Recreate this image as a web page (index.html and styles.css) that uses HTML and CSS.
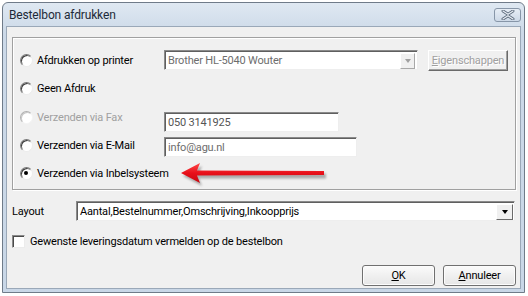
FILE: index.html
```html
<!DOCTYPE html>
<html lang="nl">
<head>
    <meta charset="UTF-8">
    <title>Bestelbon afdrukken</title>
    <link rel="stylesheet" href="styles.css">
</head>
<body>
    <div class="window">
        <div class="titlebar">
            <span class="title">Bestelbon afdrukken</span>
            <div class="close">
                <svg width="16" height="10" viewBox="0 0 16 10">
                    <path d="M3 1 L8 4.2 L13 1 M3 9 L8 5.8 L13 9" fill="none" stroke="#5d6b7c" stroke-width="3" stroke-linecap="round"/>
                    <path d="M3 1 L8 4.2 L13 1 M3 9 L8 5.8 L13 9" fill="none" stroke="#e8eef5" stroke-width="1.2" stroke-linecap="round"/>
                </svg>
            </div>
        </div>
        <div class="client">
            <div class="group">
                <div class="row">
                    <label class="option"><span class="radio"></span>Afdrukken op printer</label>
                    <div class="combo disabled printer">
                        <span class="combo-text">Brother HL-5040 Wouter</span>
                        <span class="combo-btn"><span class="tri"></span></span>
                    </div>
                    <div class="btn-classic disabled"><u>E</u>igenschappen</div>
                </div>
                <div class="row">
                    <label class="option"><span class="radio"></span>Geen Afdruk</label>
                </div>
                <div class="row">
                    <label class="option disabled"><span class="radio"></span>Verzenden via Fax</label>
                    <div class="field fax">050 3141925</div>
                </div>
                <div class="row">
                    <label class="option"><span class="radio"></span>Verzenden via E-Mail</label>
                    <div class="field mail">info@agu.nl</div>
                </div>
                <div class="row">
                    <label class="option"><span class="radio checked"></span>Verzenden via Inbelsysteem</label>
                </div>
                <svg class="arrow" width="160" height="30" viewBox="0 0 160 30">
                    <defs>
                        <filter id="blur" x="-10%" y="-50%" width="120%" height="200%">
                            <feGaussianBlur stdDeviation="1.3"/>
                        </filter>
                        <linearGradient id="red" x1="0" y1="0" x2="0" y2="1">
                            <stop offset="0" stop-color="#ff4a4a"/>
                            <stop offset="0.5" stop-color="#e8101a"/>
                            <stop offset="1" stop-color="#c8070f"/>
                        </linearGradient>
                    </defs>
                    <g filter="url(#blur)" fill="#8d8d8d" opacity="0.7" transform="translate(2,3)">
                        <polygon points="4,12 23,2 20,9.5 147,9.5 147,14.5 20,14.5 23,22"/>
                    </g>
                    <polygon points="4,12 23,2 20,9.5 147,10 147,14 20,14.5 23,22" fill="url(#red)"/>
                </svg>
            </div>

            <div class="layout-row">
                <span class="layout-label">Layout</span>
                <div class="combo layout">
                    <span class="combo-text">Aantal,Bestelnummer,Omschrijving,Inkoopprijs</span>
                    <span class="combo-btn"><span class="tri"></span></span>
                </div>
            </div>

            <label class="check-row"><span class="checkbox"></span>Gewenste leveringsdatum vermelden op de bestelbon</label>

            <div class="buttons">
                <div class="btn"><u>O</u>K</div>
                <div class="btn"><u>A</u>nnuleer</div>
            </div>
        </div>
    </div>
</body>
</html>
```

FILE: styles.css
```css
* {
    margin: 0;
    padding: 0;
    box-sizing: border-box;
}

body {
    background-color: #ffffff;
    font-family: Roboto, "Liberation Sans", Arial, sans-serif;
    font-size: 11px;
    letter-spacing: -0.18px;
    color: #000000;
}

.window {
    margin: 2px 0 0 2px;
    width: 523px;
    height: 291px;
    border: 1px solid #6f7b89;
    border-radius: 6px 6px 0 0;
    background: linear-gradient(#dfe8f2, #ccd9e8 30px, #c9d7e7);
    padding: 0 3px 3px 3px;
    display: flex;
    flex-direction: column;
}

.titlebar {
    height: 23px;
    display: flex;
    align-items: flex-start;
    justify-content: space-between;
    padding: 0 0 0 3px;
}

.title {
    margin-top: 5px;
    font-size: 12px;
    letter-spacing: -0.15px;
    color: #1e2a38;
}

.close {
    margin-top: 5px;
    width: 27px;
    height: 14px;
    border: 1px solid #8796a8;
    border-radius: 3px;
    background: linear-gradient(#e6edf5, #cdd9e7);
    display: flex;
    align-items: center;
    justify-content: center;
}

.client {
    flex: 1;
    background-color: #f0f0f0;
    border: 1px solid #9aa8b8;
    padding: 10px 4px 0 5px;
    display: flex;
    flex-direction: column;
}

.group {
    position: relative;
    height: 153px;
    border: 1px solid #a0a0a0;
    box-shadow: inset 1px 1px 0 #ffffff, 1px 1px 0 #ffffff;
    padding: 8px 0 2px 0;
    display: grid;
    grid-template-rows: 28px 29px 28px 28px 28px;
}

.row {
    display: flex;
    align-items: center;
}

.option {
    min-width: 151px;
    flex-shrink: 0;
    padding-left: 7px;
    display: flex;
    align-items: center;
    gap: 4px;
    white-space: nowrap;
}

.option.disabled {
    color: #a0a0a0;
}

.radio {
    flex-shrink: 0;
    width: 13px;
    height: 13px;
    border-radius: 50%;
    background-color: #ffffff;
    border: 1px solid;
    border-color: #7a7a7a #ececec #ececec #7a7a7a;
    box-shadow: inset 1px 1px 0 #3e3e3e;
    position: relative;
}

.option.disabled .radio {
    border-color: #b0b0b0 #f4f4f4 #f4f4f4 #b0b0b0;
    box-shadow: inset 1px 1px 0 #c8c8c8;
}

.radio.checked::after {
    content: "";
    position: absolute;
    left: 3px;
    top: 3px;
    width: 4px;
    height: 4px;
    border-radius: 50%;
    background-color: #000000;
}

.combo {
    height: 20px;
    background-color: #ffffff;
    border: 1px solid;
    border-color: #8a8a8a #eeeeee #eeeeee #8a8a8a;
    box-shadow: inset 1px 1px 0 #5f5f5f;
    display: flex;
    align-items: center;
    justify-content: space-between;
    padding: 2px 1px 1px 3px;
}

.combo.printer {
    width: 254px;
}

.combo.disabled .combo-text {
    color: #6d6d6d;
}

.combo-text {
    white-space: nowrap;
}

.combo-btn {
    width: 17px;
    height: 16px;
    background-color: #f0f0f0;
    border: 1px solid;
    border-color: #ffffff #6a6a6a #6a6a6a #ffffff;
    display: flex;
    align-items: center;
    justify-content: center;
}

.combo.disabled .combo-btn {
    border-color: #ffffff #a8a8a8 #a8a8a8 #ffffff;
    width: 15px;
    margin-right: 1px;
}

.tri {
    width: 0;
    height: 0;
    border-left: 3.5px solid transparent;
    border-right: 3.5px solid transparent;
    border-top: 4px solid #000000;
    margin-top: 1px;
}

.combo.disabled .tri {
    border-top-color: #a0a0a0;
}

.btn-classic {
    margin-left: 10px;
    width: 80px;
    height: 21px;
    background-color: #f0f0f0;
    border: 1px solid;
    border-color: #ffffff #6a6a6a #6a6a6a #ffffff;
    box-shadow: inset -1px -1px 0 #a0a0a0;
    display: flex;
    align-items: center;
    justify-content: center;
}

.btn-classic.disabled {
    color: #a0a0a0;
    text-shadow: 1px 1px 0 #ffffff;
}

.field {
    height: 20px;
    background-color: #ffffff;
    border: 1px solid;
    border-color: #8a8a8a #eeeeee #eeeeee #8a8a8a;
    box-shadow: inset 1px 1px 0 #5f5f5f;
    padding: 3px 3px 0 3px;
    color: #6d6d6d;
    white-space: nowrap;
}

.field.fax {
    width: 175px;
    margin-top: 9px;
    color: #555555;
}

.field.mail {
    width: 193px;
    margin-top: 3px;
}

.arrow {
    position: absolute;
    left: 164px;
    top: 123px;
}

.layout-row {
    margin-top: 11px;
    height: 20px;
    display: flex;
    align-items: center;
}

.layout-label {
    width: 64px;
}

.combo.layout {
    flex: 1;
    margin-right: 1px;
}

.check-row {
    margin-top: 14px;
    display: flex;
    align-items: center;
    gap: 5px;
}

.checkbox {
    width: 13px;
    height: 13px;
    background-color: #ffffff;
    border: 1px solid;
    border-color: #8a8a8a #ececec #ececec #8a8a8a;
    box-shadow: inset 1px 1px 0 #4a4a4a;
}

.buttons {
    margin-top: 17px;
    display: flex;
    justify-content: flex-end;
    gap: 8px;
}

.btn {
    width: 73px;
    height: 21px;
    border: 1px solid #707070;
    border-radius: 3px;
    background: linear-gradient(#fbfbfb, #f0f0f0 50%, #e6e6e6);
    box-shadow: inset 0 0 0 1px #fcfcfc;
    display: flex;
    align-items: center;
    justify-content: center;
}
```
